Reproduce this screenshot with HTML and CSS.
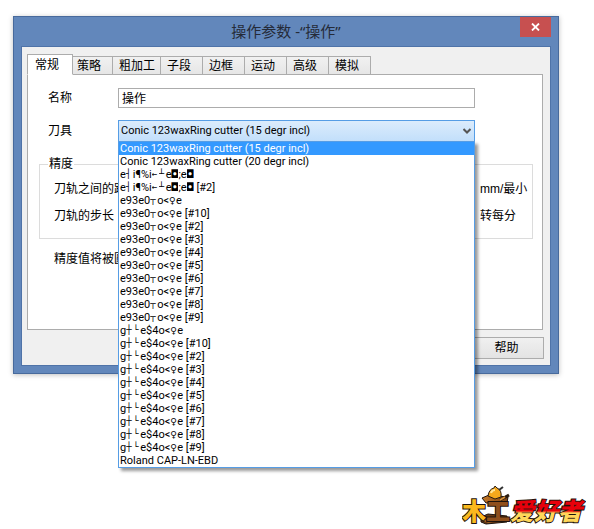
FILE: index.html
```html
<!DOCTYPE html>
<html lang="zh-CN">
<head>
    <meta charset="UTF-8">
    <meta name="viewport" content="width=device-width, initial-scale=1.0">
    <title>操作参数</title>
    <link rel="stylesheet" href="styles.css">
</head>
<body>
    <div class="window">
        <div class="titlebar">
            <h1>操作参数 -“操作”</h1>
            <button type="button" class="close-btn" aria-label="关闭">
                <svg width="9" height="8" viewBox="0 0 9 8"><path d="M1 0.5L8 7.5M8 0.5L1 7.5" stroke="#fff" stroke-width="1.8" fill="none"/></svg>
            </button>
        </div>

        <form class="client">
            <div class="tabs" role="tablist">
                <button type="button" class="tab active" role="tab" aria-selected="true">常规</button>
                <button type="button" class="tab" role="tab">策略</button>
                <button type="button" class="tab" role="tab">粗加工</button>
                <button type="button" class="tab" role="tab">子段</button>
                <button type="button" class="tab" role="tab">边框</button>
                <button type="button" class="tab" role="tab">运动</button>
                <button type="button" class="tab" role="tab">高级</button>
                <button type="button" class="tab" role="tab">模拟</button>
            </div>

            <div class="panel" role="tabpanel">
                <div class="form-row">
                    <label for="opName">名称</label>
                    <input type="text" id="opName" value="操作">
                </div>

                <div class="form-row">
                    <label for="cutter">刀具</label>
                    <div class="combo">
                        <select id="cutter">
                            <option>Conic 123waxRing cutter (15 degr incl)</option>
                        </select>
                        <svg class="arrow" width="8" height="6" viewBox="0 0 8 6"><path d="M0.5 1L4 4.5L7.5 1" stroke="#555" stroke-width="2" fill="none"/></svg>
                        <ul class="dropdown" role="listbox" aria-label="刀具">
                            <li class="selected" role="option" aria-selected="true">Conic 123waxRing cutter (15 degr incl)</li>
                            <li role="option">Conic 123waxRing cutter (20 degr incl)</li>
                            <li role="option">e<i>┤</i>i¶%i<i>←</i><i>┴</i>e<b>◘</b>;e<b>◘</b></li>
                            <li role="option">e<i>┤</i>i¶%i<i>←</i><i>┴</i>e<b>◘</b>;e<b>◘</b> [#2]</li>
                            <li role="option">e93e0<i>┬</i>o&lt;<b>♀</b>e</li>
                            <li role="option">e93e0<i>┬</i>o&lt;<b>♀</b>e [#10]</li>
                            <li role="option">e93e0<i>┬</i>o&lt;<b>♀</b>e [#2]</li>
                            <li role="option">e93e0<i>┬</i>o&lt;<b>♀</b>e [#3]</li>
                            <li role="option">e93e0<i>┬</i>o&lt;<b>♀</b>e [#4]</li>
                            <li role="option">e93e0<i>┬</i>o&lt;<b>♀</b>e [#5]</li>
                            <li role="option">e93e0<i>┬</i>o&lt;<b>♀</b>e [#6]</li>
                            <li role="option">e93e0<i>┬</i>o&lt;<b>♀</b>e [#7]</li>
                            <li role="option">e93e0<i>┬</i>o&lt;<b>♀</b>e [#8]</li>
                            <li role="option">e93e0<i>┬</i>o&lt;<b>♀</b>e [#9]</li>
                            <li role="option">g<i>┼</i><i>└</i>e$4o&lt;<b>♀</b>e</li>
                            <li role="option">g<i>┼</i><i>└</i>e$4o&lt;<b>♀</b>e [#10]</li>
                            <li role="option">g<i>┼</i><i>└</i>e$4o&lt;<b>♀</b>e [#2]</li>
                            <li role="option">g<i>┼</i><i>└</i>e$4o&lt;<b>♀</b>e [#3]</li>
                            <li role="option">g<i>┼</i><i>└</i>e$4o&lt;<b>♀</b>e [#4]</li>
                            <li role="option">g<i>┼</i><i>└</i>e$4o&lt;<b>♀</b>e [#5]</li>
                            <li role="option">g<i>┼</i><i>└</i>e$4o&lt;<b>♀</b>e [#6]</li>
                            <li role="option">g<i>┼</i><i>└</i>e$4o&lt;<b>♀</b>e [#7]</li>
                            <li role="option">g<i>┼</i><i>└</i>e$4o&lt;<b>♀</b>e [#8]</li>
                            <li role="option">g<i>┼</i><i>└</i>e$4o&lt;<b>♀</b>e [#9]</li>
                            <li role="option">Roland CAP-LN-EBD</li>
                        </ul>
                    </div>
                </div>

                <fieldset>
                    <legend>精度</legend>
                    <div class="unit-row"><span>刀轨之间的距</span><span class="unit">mm/最小</span></div>
                    <div class="unit-row"><span>刀轨的步长</span><span class="unit">转每分</span></div>
                </fieldset>

                <p class="note">精度值将被圆</p>
            </div>

            <div class="buttons">
                <button type="button" class="btn">帮助</button>
            </div>
        </form>
    </div>

    <div class="logo">
        <svg width="124" height="42" viewBox="0 0 124 42">
            <defs>
                <linearGradient id="fire" x1="0" y1="0" x2="0" y2="1">
                    <stop offset="0.54" stop-color="#e8000b"/>
                    <stop offset="0.60" stop-color="#ffd75a"/>
                </linearGradient>
                <linearGradient id="plank" x1="0" y1="0" x2="1" y2="0">
                    <stop offset="0" stop-color="#c77a26"/>
                    <stop offset="1" stop-color="#7a4216"/>
                </linearGradient>
            </defs>
            <!-- wooden base and top plank -->
            <path d="M19 32L26 29L45 31L45 37L24 39L19 37Z" fill="#6b3a14" stroke="#1d130c" stroke-width="1"/>
            <path d="M20 13L27 10L46 12L45 18L24 18Z" fill="url(#plank)" stroke="#1d130c" stroke-width="1"/>
            <path d="M21 35L26 37L44 35" stroke="#d98a2b" stroke-width="1" fill="none"/>
            <!-- hard hat and brush -->
            <path d="M26 11Q27 4 32 3L33 1L35 3Q40 5 39 12L33 14Z" fill="#f5a81c" stroke="#2a1c10" stroke-width="1"/>
            <path d="M29 8Q30 5 33 5" stroke="#ffe69a" stroke-width="2" fill="none"/>
            <path d="M37 5L41 2" stroke="#333" stroke-width="2"/>
            <path d="M38 15L47 10" stroke="#2a1c10" stroke-width="3"/>
            <path d="M38 15L43 12" stroke="#d9923a" stroke-width="2"/>
            <text class="wood" x="0" y="35"><tspan class="wood-light">木</tspan><tspan class="wood-dark">工</tspan></text>
            <text class="fans" x="48" y="35" fill="url(#fire)">爱好者</text>
        </svg>
    </div>
</body>
</html>
```

FILE: styles.css
```css
* {
    box-sizing: border-box;
}
body {
    margin: 0;
    padding: 16px 35px 0 13px;
    background-color: #fff;
    color: #000;
    font-family: "Noto Sans", "Noto Sans CJK SC", sans-serif;
    font-size: 12px;
    line-height: 16px;
}
button, input, select {
    font: inherit;
    color: inherit;
}

/* Window frame */
.window {
    padding: 0 7px 7px;
    background-color: #6287bb;
    border: 1px solid #486a9c;
    box-shadow: 0 1px 5px rgba(0,0,0,0.25);
}
.titlebar {
    position: relative;
    height: 29px;
}
h1 {
    margin: 0;
    color: #252b38;
    font-size: 15px;
    font-weight: normal;
    line-height: 29px;
    text-align: center;
}
.close-btn {
    position: absolute;
    top: 0;
    right: 0;
    display: flex;
    align-items: center;
    justify-content: center;
    width: 31px;
    height: 20px;
    padding: 0;
    background-color: #c75050;
    border: none;
}
.client {
    padding: 7px 7px 6px 5px;
    background-color: #f0f0f0;
    border: 1px solid #4f73a8;
}

/* Tabs */
.tabs {
    display: flex;
    align-items: flex-end;
    height: 21px;
}
.tab {
    min-width: 42px;
    height: 19px;
    padding: 0 5px 0 6px;
    background: linear-gradient(#f1f1f1, #e6e6e6);
    border: 1px solid #acacac;
    border-left-width: 0;
    text-align: left;
    line-height: 17px;
    white-space: nowrap;
}
.tab.active {
    z-index: 1;
    min-width: 46px;
    height: 21px;
    margin-right: -2px;
    padding: 0 7px;
    background: #fff;
    border-left-width: 1px;
    border-bottom-color: #fff;
}

.panel {
    height: 256px;
    margin-top: -1px;
    padding: 12px 9px 0 11px;
    background-color: #fff;
    border: 1px solid #acacac;
}
.form-row {
    display: grid;
    grid-template-columns: 70px 1fr;
    align-items: center;
    height: 22px;
    margin: 0 58px 11px 9px;
}
input {
    width: 100%;
    height: 20px;
    padding: 0 3px;
    border: 1px solid #acacac;
}
.combo {
    position: relative;
    font-family: Roboto, "Liberation Sans", sans-serif;
    font-size: 11px;
}
select {
    display: block;
    width: 100%;
    height: 22px;
    padding: 0 2px;
    appearance: none;
    background: linear-gradient(#dcecfc, #c2dffb);
    border: 1px solid #569de5;
    border-radius: 0;
}
.arrow {
    position: absolute;
    top: 8px;
    right: 4px;
}
.dropdown {
    position: absolute;
    z-index: 2;
    top: 21px;
    left: 0;
    width: 100%;
    margin: 0;
    padding: 0;
    background-color: #fff;
    border: 1px solid #569de5;
    box-shadow: 3px 3px 3px rgba(0,0,0,0.4);
    list-style: none;
    line-height: 13px;
}
.dropdown li {
    height: 13px;
    padding-left: 1px;
    white-space: nowrap;
}
.dropdown .selected {
    background-color: #3399ff;
    color: #fff;
}
/* line-drawing and symbol characters */
.dropdown i, .dropdown b {
    display: inline-block;
    width: 7px;
    height: 12px;
    overflow: hidden;
    font-family: "DejaVu Sans Mono", monospace;
    font-size: 9px;
    font-style: normal;
    font-weight: normal;
    vertical-align: top;
}
.dropdown b {
    font-size: 11px;
}

fieldset {
    margin: 14px 0 0;
    padding: 9px 8px 0 14px;
    height: 83px;
    border: 1px solid #dcdcdc;
}
legend {
    margin-left: -6px;
    padding: 0 1px;
}
.unit-row {
    display: flex;
    justify-content: space-between;
    height: 27px;
    white-space: nowrap;
}
.unit {
    width: 44px;
    font-family: "Liberation Sans", "Noto Sans CJK SC", sans-serif;
}
.note {
    margin: 12px 0 0 15px;
}

.buttons {
    display: flex;
    justify-content: flex-end;
    margin: 7px -1px 0 0;
}
.btn {
    width: 75px;
    height: 22px;
    padding: 0;
    background: linear-gradient(#f0f0f0, #e3e3e3);
    border: 1px solid #acacac;
}

/* Logo */
.logo {
    display: flex;
    justify-content: flex-end;
    margin: 111px -27px 0 0;
}
.logo text {
    font-family: "Noto Sans CJK SC", sans-serif;
    font-weight: 900;
    paint-order: stroke;
    stroke: #1d130c;
    stroke-width: 2px;
}
.wood {
    font-size: 24px;
}
.wood-light {
    fill: #fbb81e;
}
.wood-dark {
    fill: #8f4f1c;
}
.fans {
    font-size: 24px;
    font-style: italic;
}
```
